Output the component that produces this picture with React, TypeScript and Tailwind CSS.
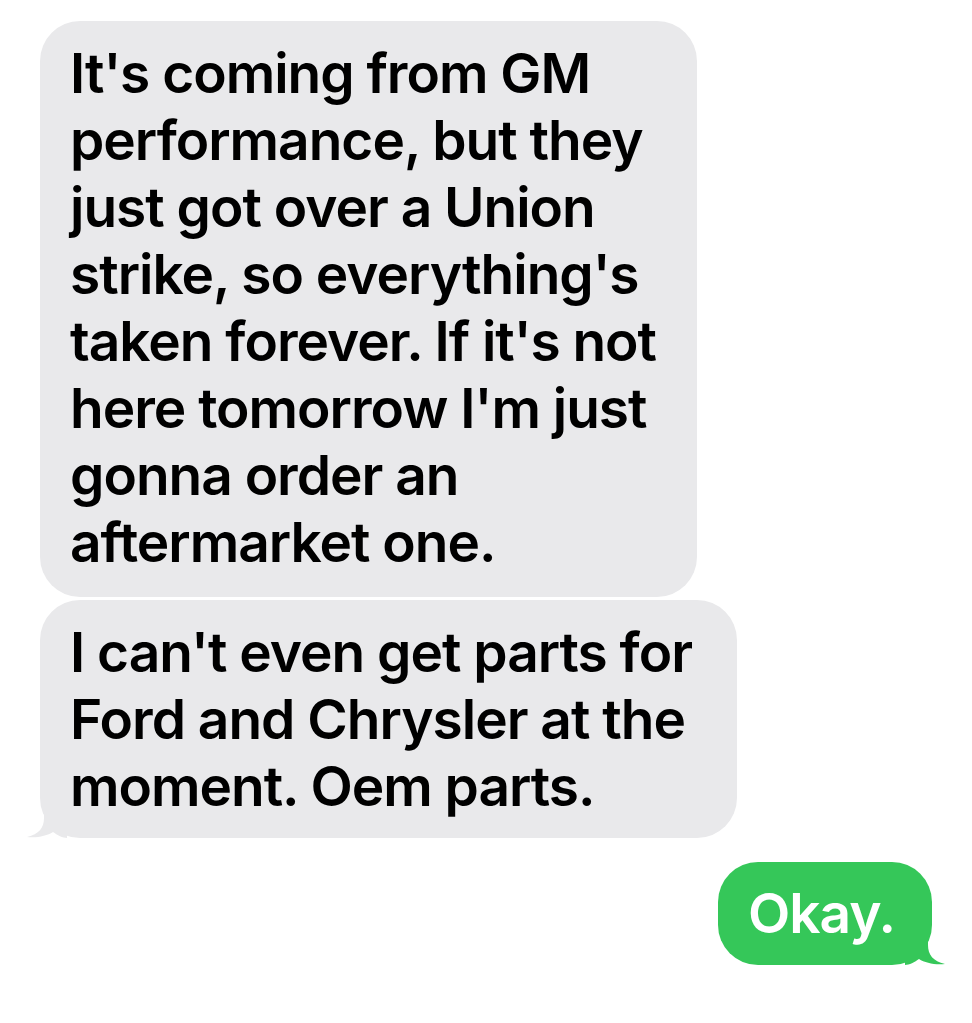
import React from 'react';

const incoming = [
  [
    "It's coming from GM",
    'performance, but they',
    'just got over a Union',
    "strike, so everything's",
    "taken forever. If it's not",
    "here tomorrow I'm just",
    'gonna order an',
    'aftermarket one.',
  ],
  ["I can't even get parts for", 'Ford and Chrysler at the', 'moment. Oem parts.'],
];

const TailLeft = () => (
  <svg className="absolute -left-[13px] bottom-0" width="40" height="36" viewBox="0 0 40 36">
    <path d="M40 0 H17 V16 C17 26 12 32 0 35 C10 36 20 34 26 30 C30 33 36 36 40 36 Z" fill="#e9e9eb" />
  </svg>
);

const TailRight = () => (
  <svg className="absolute -right-[13px] bottom-0" width="40" height="36" viewBox="0 0 40 36">
    <path d="M0 0 H23 V16 C23 26 28 32 40 35 C30 36 20 34 14 30 C10 33 4 36 0 36 Z" fill="#35c759" />
  </svg>
);

const bubbleText = 'text-[55px] leading-[67px] font-[560] tracking-[-1px]';

export default function App() {
  return (
    <div
      className="w-[972px] h-[1023px] bg-white overflow-hidden"
      style={{ fontFamily: 'Inter, "Noto Sans", sans-serif' }}
    >
      <div className="flex flex-col pt-[21px]">
        {/* first incoming */}
        <div className={`ml-[40px] w-[657px] rounded-[40px] bg-[#e9e9eb] pl-[30px] pt-[19px] pb-[21px] text-black ${bubbleText}`}>
          {incoming[0].map((l) => (
            <div key={l} className="whitespace-nowrap">{l}</div>
          ))}
        </div>

        {/* second incoming with tail */}
        <div className={`relative ml-[40px] mt-[3px] w-[697px] rounded-[40px] bg-[#e9e9eb] pl-[30px] pt-[19px] pb-[18px] text-black ${bubbleText}`}>
          {incoming[1].map((l) => (
            <div key={l} className="whitespace-nowrap">{l}</div>
          ))}
          <TailLeft />
        </div>

        {/* outgoing */}
        <div className="flex justify-end pr-[40px] mt-[24px]">
          <div className={`relative w-[214px] h-[103px] rounded-[40px] bg-[#35c759] pl-[30px] pt-[18px] text-white ${bubbleText}`}>
            Okay.
            <TailRight />
          </div>
        </div>
      </div>
    </div>
  );
}
